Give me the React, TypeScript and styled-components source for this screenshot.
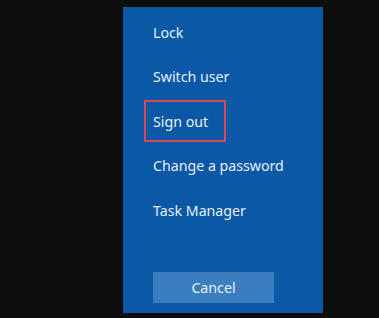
import styled, { createGlobalStyle } from 'styled-components';

const items = ['Lock', 'Switch user', 'Sign out', 'Change a password', 'Task Manager'];

export default () => (
  <>
    <GlobalStyle />
    <StyledScreen>
      <StyledPanel>
        <StyledList>
          {items.map((item) => (
            <StyledItem key={item}>
              {item === 'Sign out' ? <StyledHighlight>{item}</StyledHighlight> : item}
            </StyledItem>
          ))}
        </StyledList>
        <StyledCancel>Cancel</StyledCancel>
      </StyledPanel>
    </StyledScreen>
  </>
);

const GlobalStyle = createGlobalStyle`
  html, body {
    margin: 0;
    background: #0e0e0e;
  }
  body {
    font-family: 'Noto Sans', 'Open Sans', sans-serif;
  }
`;

const StyledScreen = styled.div`
  width: 379px;
  height: 318px;
  padding: 7px 0 0 123px;
  box-sizing: border-box;
`;

const StyledPanel = styled.div`
  display: flex;
  flex-direction: column;
  width: 200px;
  height: 306px;
  box-sizing: border-box;
  padding: 3px 0 10px 30px;
  background: #0b59a6;
`;

const StyledList = styled.ul`
  list-style: none;
  margin: 0;
  padding: 0;
  display: flex;
  flex-direction: column;
`;

const StyledItem = styled.li`
  height: 44.5px;
  display: flex;
  align-items: center;
  font-size: 14.2px;
  color: #e6eef8;
  white-space: nowrap;
`;

const StyledHighlight = styled.span`
  display: flex;
  align-items: center;
  box-sizing: border-box;
  width: 82px;
  height: 42px;
  margin-left: -9px;
  padding-left: 7px;
  border: 2px solid #d9475a;
`;

const StyledCancel = styled.button`
  margin-top: auto;
  width: 121px;
  height: 31px;
  border: none;
  padding: 0;
  background: #3b7ec0;
  color: #e6eef8;
  font-family: inherit;
  font-size: 14.2px;
`;
